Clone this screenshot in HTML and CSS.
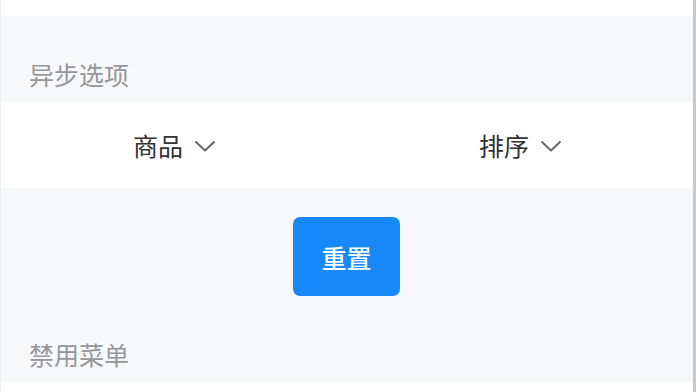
FILE: index.html
```html
<!DOCTYPE html>
<html lang="zh">
<head>
<meta charset="utf-8">
<link rel="stylesheet" href="styles.css">
</head>
<body>
<div class="page">
  <div class="top-strip"></div>
  <div class="demo-title">异步选项</div>
  <div class="dropdown">
    <div class="dropdown-item">
      <span class="dropdown-label">商品</span>
      <svg class="chevron" width="20" height="11" viewBox="0 0 20 11"><path d="M1 1 L10 9.5 L19 1" fill="none" stroke="#646566" stroke-width="1.9" stroke-linecap="round" stroke-linejoin="round"/></svg>
    </div>
    <div class="dropdown-item">
      <span class="dropdown-label">排序</span>
      <svg class="chevron" width="20" height="11" viewBox="0 0 20 11"><path d="M1 1 L10 9.5 L19 1" fill="none" stroke="#646566" stroke-width="1.9" stroke-linecap="round" stroke-linejoin="round"/></svg>
    </div>
  </div>
  <div class="button-row">
    <button class="btn-primary">重置</button>
  </div>
  <div class="demo-title">禁用菜单</div>
  <div class="bottom-strip"></div>
</div>
</body>
</html>
```
FILE: styles.css
```css
html, body {
  margin: 0;
  padding: 0;
  height: 100%;
  background: #ffffff;
  overflow: hidden;
}
.page {
  height: 392px;
  box-sizing: border-box;
  background: #f7f8fa;
  border-left: 1px solid #eeeeee;
  border-right: 3px solid #c9c9c9;
  font-family: "Noto Sans CJK SC", "Noto Sans", sans-serif;
  display: flex;
  flex-direction: column;
}
.top-strip {
  height: 16px;
  background: #ffffff;
  flex: none;
}
.bottom-strip {
  flex: 1;
  background: #ffffff;
}
.demo-title {
  flex: none;
  padding: 43px 28px 13px;
  font-size: 25px;
  line-height: 30px;
  color: #969799;
}
.dropdown {
  flex: none;
  height: 86px;
  background: #ffffff;
  display: flex;
}
.dropdown-item {
  flex: 1;
  display: flex;
  align-items: center;
  justify-content: center;
  gap: 12px;
}
.dropdown-label {
  font-size: 25px;
  line-height: 30px;
  color: #323233;
}
.chevron {
  display: block;
  margin-top: 2px;
}
.button-row {
  flex: none;
  display: flex;
  justify-content: center;
  padding-top: 29px;
}
.btn-primary {
  width: 107px;
  height: 79px;
  border: none;
  border-radius: 7px;
  background: #1989fa;
  color: #ffffff;
  font-family: "Noto Sans CJK SC", "Noto Sans", sans-serif;
  font-size: 25px;
  font-weight: 500;
  padding: 0;
  margin-right: 1px;
}
```
